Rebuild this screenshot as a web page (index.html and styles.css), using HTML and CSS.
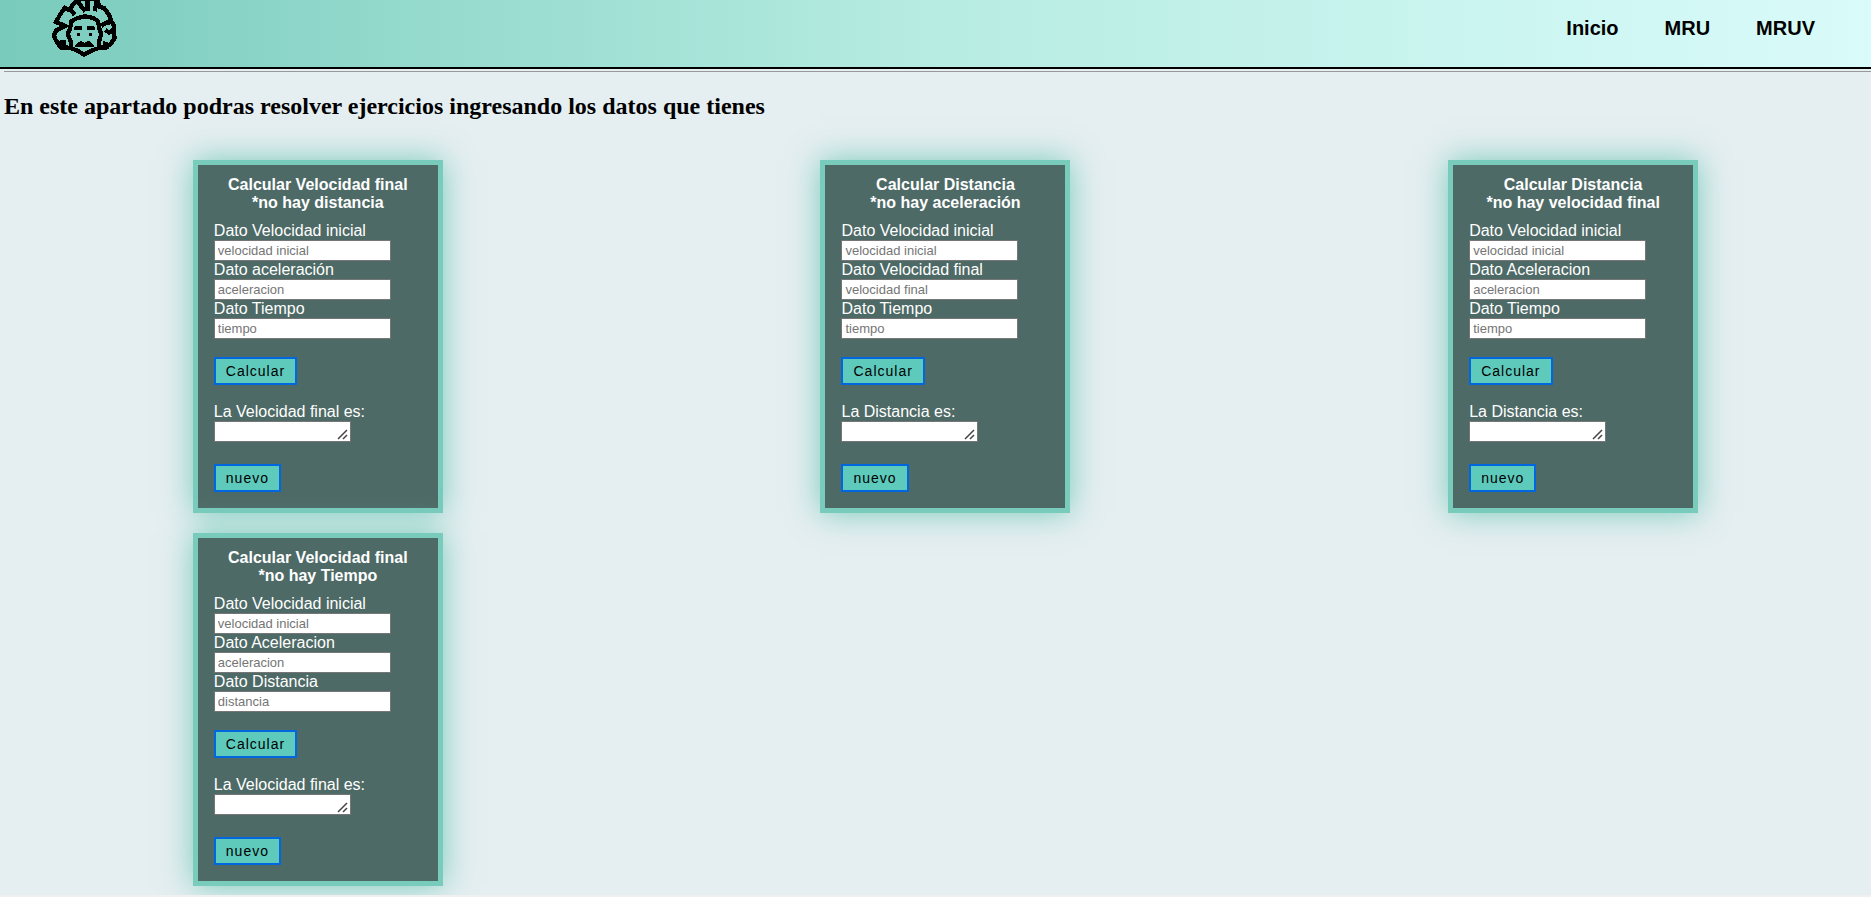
FILE: index.html
```html
<!DOCTYPE html>
<html lang="es">
<head>
<meta charset="utf-8">
<title>MRUV</title>
<link rel="stylesheet" href="styles.css">
</head>
<body>
<header class="header">
  <a class="logo" href="#" aria-label="Inicio">
    <svg viewBox="150 0 204 174" width="68" height="58" fill="none" stroke="#000" stroke-width="13" shape-rendering="crispEdges" aria-hidden="true">
      <path d="M204 142H182L168 122L162 106L168 92L196 78L168 66L180 44L194 24L206 30L226 6L246 -4H292L298 20L312 24L328 46L334 66L342 76L340 96L344 114L332 132L318 142H300"/>
      <path d="M203 22L224 44M232 4L256 34M262 0V34M290 4L284 34M340 66L318 68L304 78M316 90L328 98L338 92"/>
      <path d="M212 148V124L203 102L210 86L214 64L232 54L255 49L280 54L294 64L298 86L304 102L297 124V148"/>
      <path d="M186 144H212L232 152L253 164L274 152L297 144H322"/>
      <path fill="#000" stroke="none" d="M176 122L198 120V148H184ZM309 122L334 132L324 148H306Z"/>
      <path fill="#000" stroke="none" d="M222 80L247 77V91H222ZM260 77L285 80V91H260ZM231 99H241V108H231ZM267 99H277V108H267ZM226 141V135L242 122L254 129L266 122L282 135V141Z"/>
    </svg>
  </a>
  <nav class="nav">
    <a href="#">Inicio</a>
    <a href="#">MRU</a>
    <a href="#">MRUV</a>
  </nav>
</header>
<hr class="rule">
<main>
  <h2 class="title">En este apartado podras resolver ejercicios ingresando los datos que tienes</h2>
  <div class="cards">
    <form class="card">
      <h3>Calcular Velocidad final<br>*no hay distancia</h3>
      <label for="a1">Dato Velocidad inicial</label>
      <input id="a1" type="text" placeholder="velocidad inicial">
      <label for="a2">Dato aceleración</label>
      <input id="a2" type="text" placeholder="aceleracion">
      <label for="a3">Dato Tiempo</label>
      <input id="a3" type="text" placeholder="tiempo">
      <button type="button">Calcular</button>
      <label for="a4">La Velocidad final es:</label>
      <textarea id="a4" rows="1"></textarea>
      <button type="reset">nuevo</button>
    </form>
    <form class="card">
      <h3>Calcular Distancia<br>*no hay aceleración</h3>
      <label for="b1">Dato Velocidad inicial</label>
      <input id="b1" type="text" placeholder="velocidad inicial">
      <label for="b2">Dato Velocidad final</label>
      <input id="b2" type="text" placeholder="velocidad final">
      <label for="b3">Dato Tiempo</label>
      <input id="b3" type="text" placeholder="tiempo">
      <button type="button">Calcular</button>
      <label for="b4">La Distancia es:</label>
      <textarea id="b4" rows="1"></textarea>
      <button type="reset">nuevo</button>
    </form>
    <form class="card">
      <h3>Calcular Distancia<br>*no hay velocidad final</h3>
      <label for="c1">Dato Velocidad inicial</label>
      <input id="c1" type="text" placeholder="velocidad inicial">
      <label for="c2">Dato Aceleracion</label>
      <input id="c2" type="text" placeholder="aceleracion">
      <label for="c3">Dato Tiempo</label>
      <input id="c3" type="text" placeholder="tiempo">
      <button type="button">Calcular</button>
      <label for="c4">La Distancia es:</label>
      <textarea id="c4" rows="1"></textarea>
      <button type="reset">nuevo</button>
    </form>
    <form class="card">
      <h3>Calcular Velocidad final<br>*no hay Tiempo</h3>
      <label for="d1">Dato Velocidad inicial</label>
      <input id="d1" type="text" placeholder="velocidad inicial">
      <label for="d2">Dato Aceleracion</label>
      <input id="d2" type="text" placeholder="aceleracion">
      <label for="d3">Dato Distancia</label>
      <input id="d3" type="text" placeholder="distancia">
      <button type="button">Calcular</button>
      <label for="d4">La Velocidad final es:</label>
      <textarea id="d4" rows="1"></textarea>
      <button type="reset">nuevo</button>
    </form>
  </div>
</main>
</body>
</html>
```
FILE: styles.css
```css
* {
  box-sizing: border-box;
}

html {
  background: #f0f0f0;
}

body {
  margin: 0;
  background: #e5eef1;
  font-family: "Liberation Sans", Arial, sans-serif;
}

main {
  overflow: hidden;
}

.header {
  display: flex;
  justify-content: space-between;
  align-items: flex-start;
  padding: 0 56px 9px 50px;
  border-bottom: 2px solid #000;
  background: linear-gradient(to right, #79cbbc, #b7ece2 50%, #d9fbfa);
}

.logo,
.logo svg {
  display: block;
}

.nav {
  display: flex;
  gap: 46px;
  padding-top: 16px;
}

.nav a {
  color: #000;
  font-size: 20px;
  line-height: 24px;
  font-weight: bold;
  text-decoration: none;
}

.rule {
  height: 1px;
  margin: 2px 0 0 4px;
  border: 0;
  background: #999;
}

.title {
  margin: 20px 4px 40px;
  font-family: "Liberation Serif", "Times New Roman", serif;
  font-size: 24px;
  line-height: 28px;
}

.cards {
  display: grid;
  grid-template-columns: repeat(3, 1fr);
  justify-items: center;
  gap: 20px 32px;
  padding: 0 0 9px 20px;
}

.card {
  display: flex;
  flex-direction: column;
  align-items: flex-start;
  width: 250px;
  padding: 11px 16px 16px;
  border: 5px solid #79cbbc;
  background: #4e6a66;
  box-shadow: 0 0 30px #79cbbc;
  color: #fff;
  font-size: 16px;
  line-height: 18px;
}

.card h3 {
  align-self: center;
  margin: 0 0 10px;
  font-size: 16px;
  text-align: center;
}

.card input,
.card textarea {
  height: 21px;
  margin: 0;
  padding: 1px 3px;
  border: 1px solid #767676;
  background: #fff;
  font-family: "Liberation Sans", Arial, sans-serif;
  font-size: 13px;
  line-height: 15px;
}

.card input {
  width: 177px;
}

.card textarea {
  width: 137px;
  resize: both;
  overflow: auto;
}

.card textarea::-webkit-resizer {
  background: url("data:image/svg+xml,%3Csvg xmlns='http://www.w3.org/2000/svg' width='15' height='15'%3E%3Cpath d='M3 13L12 4M8 13L12 9' stroke='%23444' stroke-width='1.5'/%3E%3C/svg%3E") no-repeat right bottom;
}

.card button {
  margin: 18px 0;
  padding: 4px 10px;
  border: 2px solid #0067e0;
  background: #5ecabb;
  color: #000;
  font-family: "Liberation Sans", Arial, sans-serif;
  font-size: 14px;
  line-height: 16px;
  letter-spacing: 1px;
}

.card button[type="reset"] {
  margin: 22px 0 0;
}
```
